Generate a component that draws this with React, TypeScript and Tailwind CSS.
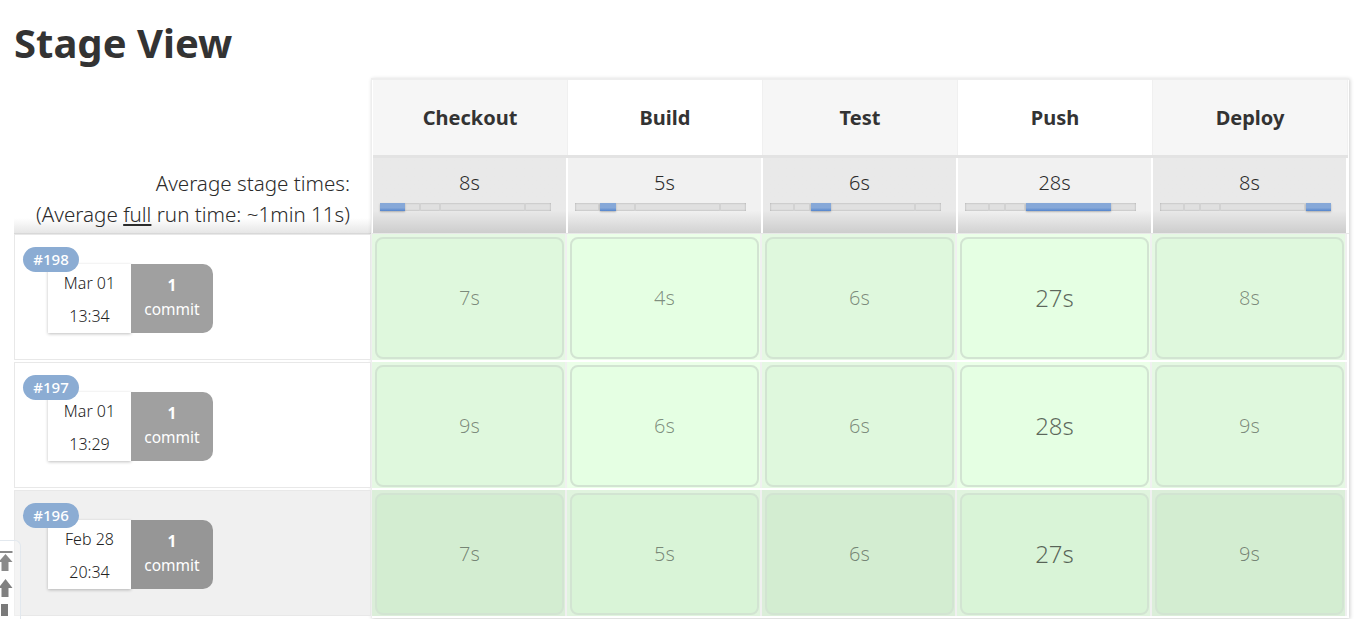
import * as React from "react";

const font = "font-['Noto_Sans','Open_Sans',sans-serif]";

const stages = [
	{ name: "Checkout", avg: "8s", active: 0 },
	{ name: "Build", avg: "5s", active: 1 },
	{ name: "Test", avg: "6s", active: 2 },
	{ name: "Push", avg: "28s", active: 3 },
	{ name: "Deploy", avg: "8s", active: 4 },
];

const segments = ["w-[25px]", "w-[16px]", "w-[20px]", "w-[85px]", "w-[25px]"];

const runs = [
	{ id: "#198", date: "Mar 01", time: "13:34", times: ["7s", "4s", "6s", "27s", "8s"], sizes: [20, 20, 20, 24, 20] },
	{ id: "#197", date: "Mar 01", time: "13:29", times: ["9s", "6s", "6s", "28s", "9s"], sizes: [20, 20, 20, 24, 20] },
	{ id: "#196", date: "Feb 28", time: "20:34", times: ["7s", "5s", "6s", "27s", "9s"], sizes: [20, 20, 20, 24, 20] },
];

function ProgressBar({ active }: { active: number }) {
	return (
		<div className="flex h-2 w-[171px] bg-[#e0e0e0] shadow-[inset_0_0_2px_rgba(0,0,0,0.3)]">
			{segments.map((w, i) => (
				<div
					key={i}
					className={`${w} h-2 ${
						i === active
							? "bg-gradient-to-b from-[#86a8d8] from-60% to-[#5585cc] shadow-[0_1px_2px_rgba(0,0,0,0.25)]"
							: "border-r-2 border-[#d2d2d2] last:border-r-0"
					}`}
				/>
			))}
		</div>
	);
}

function StageHead({ index, name, avg, active }: { index: number; name: string; avg: string; active: number }) {
	const odd = index % 2 === 0;
	return (
		<div className="flex w-[195px] flex-col">
			<div
				className={`flex h-[75px] items-center justify-center border-r border-[#f0f0f0] text-[20px] font-bold text-[#333] ${
					odd ? "bg-[#f6f6f6]" : "bg-white"
				}`}
			>
				{name}
			</div>
			<div className="h-[3px] bg-[#e3e3e3]" />
			<div
				className={`flex h-[75px] flex-col items-center border-r-2 border-white pt-[10px] ${
					odd ? "bg-gradient-to-b from-[#e9e9e9] from-70% to-[#cdcdcd]" : "bg-gradient-to-b from-[#f1f1f1] from-70% to-[#d2d2d2]"
				}`}
			>
				<div className="h-[30px] text-[20px] font-light leading-[30px] text-[#2b2b2b]">{avg}</div>
				<div className="mr-[8px] mt-[5px]">
					<ProgressBar active={active} />
				</div>
			</div>
		</div>
	);
}

function RunLabel({ run, shaded }: { run: (typeof runs)[number]; shaded: boolean }) {
	return (
		<div className={`relative mb-[2px] h-[126px] border border-[#e8e8e8] ${shaded ? "bg-[#f0f0f0]" : "bg-white"}`}>
			<div className="absolute left-[8px] top-[12px] z-10 flex h-[25px] w-[56px] items-center justify-center rounded-full bg-[#8bacd3] pb-[1px] text-[15px] font-medium text-white">
				{run.id}
			</div>
			<div className="ml-[33px] mt-[29px] flex h-[69px] w-[165px]">
				<div className="flex w-[83px] flex-col items-center bg-white pt-[3px] text-[16px] font-light leading-[33px] text-[#222] shadow-[0_1px_3px_rgba(0,0,0,0.25)]">
					<span>{run.date}</span>
					<span>{run.time}</span>
				</div>
				<div
					className={`flex w-[82px] flex-col items-center justify-center rounded-r-[10px] pb-[4px] text-[15.5px] leading-[24px] text-white ${
						shaded ? "bg-[#969696]" : "bg-[#a0a0a0]"
					}`}
				>
					<span className="font-bold">1</span>
					<span>commit</span>
				</div>
			</div>
		</div>
	);
}

function StageCell({ text, size, col, shaded }: { text: string; size: number; col: number; shaded: boolean }) {
	const odd = col % 2 === 0;
	let cellBg = odd ? "bg-[#e5f8e3]" : "bg-[#ebffe8]";
	let cardBg = odd ? "bg-[#dff8dd]" : "bg-[#e5ffe3]";
	if (shaded) {
		cellBg = odd ? "bg-[#dbeed9]" : "bg-[#e0f4de]";
		cardBg = odd ? "bg-[#d3edd1]" : "bg-[#d9f4d7]";
	}
	return (
		<div className={`flex h-[126px] w-[195px] border-r-2 border-[#f0f0f0] p-[3px] pr-[1px] ${cellBg}`}>
			<div
				className={`flex h-[122px] w-[191px] items-center justify-center rounded-[8px] border-2 border-[#d2e4d2] font-light ${cardBg} ${
					size === 24 ? "text-[24px] text-black/60" : "text-[20px] text-black/45"
				}`}
			>
				{text}
			</div>
		</div>
	);
}

function ScrollWidget() {
	return (
		<div className="absolute left-0 top-[540px] z-20 flex h-[90px] w-[21px] flex-col items-start gap-[6px] rounded-tr-[6px] border-r border-t border-[#e2e8ee] bg-white/30 pt-[10px]">
			<svg className="-ml-[2px] blur-[0.6px]" width="15" height="22" viewBox="0 0 14 22" fill="#8a8a8a">
				<rect x="0" y="0" width="14" height="2" />
				<path d="M7 3 L14 11 L10 11 L10 20 L3 20 L3 11 L0 11 Z" />
			</svg>
			<svg className="-ml-[2px] blur-[0.6px]" width="15" height="19" viewBox="0 0 14 19" fill="#808080">
				<path d="M7 0 L14 9 L10 9 L10 18 L3 18 L3 9 L0 9 Z" />
			</svg>
			<div className="ml-[1px] h-[12px] w-[7px] bg-[#7a7a7a]" />
		</div>
	);
}

export default function App() {
	return (
		<div className={`relative h-[619px] w-[1360px] overflow-hidden bg-white ${font}`}>
			<ScrollWidget />
			<h1 className="ml-[14px] h-[78px] pt-[14px] text-[40px] font-bold leading-[58px] text-[#333]">Stage View</h1>
			<div className="ml-[14px] flex">
				<div className="w-[357px]">
					<div className="h-[80px]" />
					<div className="flex h-[75px] flex-col items-end justify-end bg-gradient-to-b from-white from-80% to-[#e6e6e6] pb-[3px] pr-[21px] text-[20.6px] font-light leading-[31px] text-[#2b2b2b]">
						<div>Average stage times:</div>
						<div>
							(Average <span className="underline">full</span> run time: ~1min 11s)
						</div>
					</div>
					<div className="h-[1px] bg-[#d8d8d8]" />
					{runs.map((run, i) => (
						<RunLabel key={run.id} run={run} shaded={i === 2} />
					))}
				</div>
				<div className="w-[978px] border-t-2 border-l border-[#eeeeee] shadow-[1px_1px_4px_rgba(0,0,0,0.2)]">
					<div className="flex pl-[1px]">
						{stages.map((s, i) => (
							<StageHead key={s.name} index={i} name={s.name} avg={s.avg} active={s.active} />
						))}
					</div>
					<div className="h-[1px] bg-[#e8e8e8]" />
					{runs.map((run, r) => (
						<div key={run.id} className="mb-[2px] flex">
							{run.times.map((t, c) => (
								<StageCell key={c} text={t} size={run.sizes[c]} col={c} shaded={r === 2} />
							))}
						</div>
					))}
				</div>
			</div>
		</div>
	);
}
